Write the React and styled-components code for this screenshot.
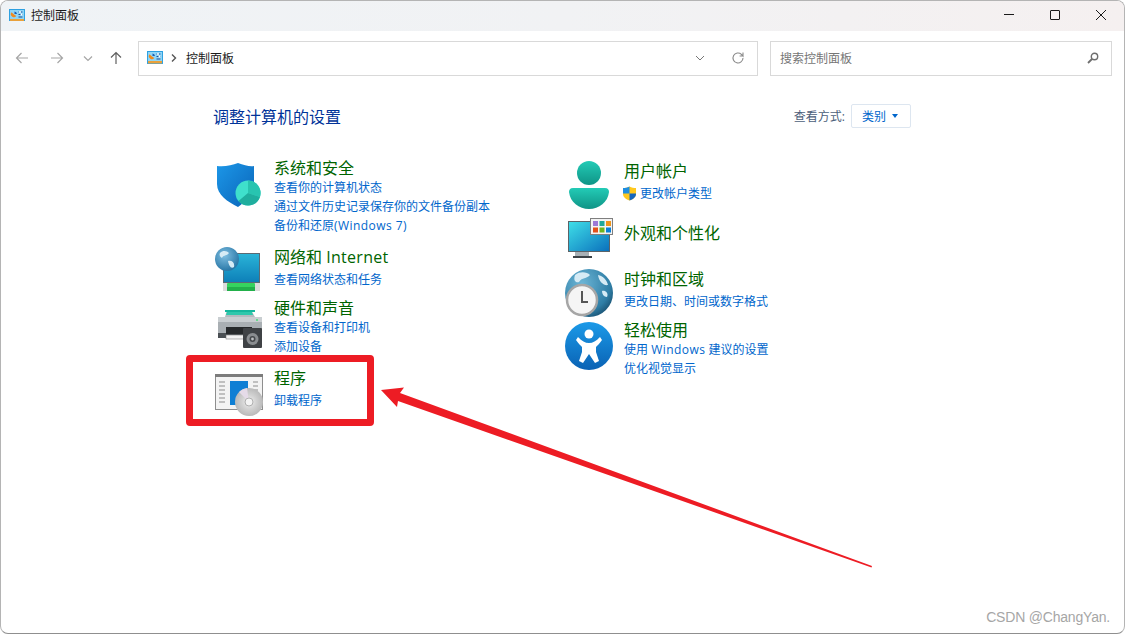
import React from "react";
import styled, { createGlobalStyle } from "styled-components";

const Global = createGlobalStyle`
  html, body { margin: 0; padding: 0; background: #fff; }
  body { font-family: "Open Sans", "Noto Sans CJK SC", sans-serif; overflow: hidden; }
  * { box-sizing: border-box; }
`;

const Page = styled.div`
  position: relative;
  width: 1125px;
  height: 634px;
  overflow: hidden;
  background: #fff;
`;
const Win = styled.div`
  width: 1125px;
  height: 634px;
  display: flex;
  flex-direction: column;
  border: 1px solid #b4b4b4;
  border-bottom: 1px solid #8f8f8f;
  border-radius: 8px;
  overflow: hidden;
  background: #fff;
`;
const TitleBar = styled.div`
  height: 30px;
  flex: none;
  display: flex;
  align-items: center;
  padding: 0 0 2px 8px;
  background: linear-gradient(90deg, #eff3f6 0%, #f1f2f4 50%, #f5f0f0 100%);
`;
const TitleText = styled.span`
  margin-left: 6px;
  font-size: 12px;
  color: #1a1a1a;
`;
const WinButtons = styled.div`
  margin-left: auto;
  display: flex;
  align-items: center;
  gap: 36px;
  padding-right: 18px;
`;
const NavBar = styled.div`
  flex: none;
  display: flex;
  padding: 10px 12px 0 137px;
  position: relative;
  height: 55px;
`;
const NavButtons = styled.div`
  position: absolute;
  left: 14px;
  top: 20px;
  display: grid;
  grid-template-columns: 33px 35px 26px 14px;
  align-items: center;
`;
const AddressBox = styled.div`
  width: 620px;
  height: 35px;
  flex: none;
  border: 1px solid #d9d9d9;
  display: flex;
  align-items: center;
  padding: 0 12px 2px 8px;
  font-size: 12px;
  color: #1a1a1a;
`;
const Crumb = styled.span`
  margin-left: 9px;
`;
const Chevron = styled.svg`
  margin-left: 8px;
`;
const AddressTools = styled.div`
  margin-left: auto;
  display: flex;
  align-items: center;
  gap: 26px;
`;
const SearchBox = styled.div`
  margin-left: 12px;
  width: 342px;
  height: 35px;
  flex: none;
  border: 1px solid #d9d9d9;
  display: flex;
  align-items: center;
  justify-content: space-between;
  padding: 0 12px 2px 9px;
  font-size: 12px;
  color: #767676;
`;
const Main = styled.main`
  width: 698px;
  margin-left: 212px;
  padding-top: 18px;
`;
const HeaderRow = styled.div`
  height: 24px;
  display: flex;
  align-items: center;
  justify-content: space-between;
`;
const Heading = styled.h1`
  margin: 0;
  font-size: 16px;
  font-weight: 400;
  color: #003399;
`;
const ViewBy = styled.div`
  display: flex;
  align-items: center;
  font-size: 12px;
  color: #4c607a;
`;
const Select = styled.div`
  margin-left: 6px;
  width: 60px;
  height: 24px;
  border: 1px solid #dde6f0;
  border-radius: 2px;
  display: flex;
  align-items: center;
  gap: 6px;
  padding-left: 10px;
  color: #0066cc;
`;
const Tri = styled.span`
  width: 0;
  height: 0;
  border-left: 3.5px solid transparent;
  border-right: 3.5px solid transparent;
  border-top: 4px solid #0066cc;
`;
const Columns = styled.div`
  display: grid;
  grid-template-columns: 350px 1fr;
  margin-top: 29px;
  padding-left: 1px;
`;
const Column = styled.div`
  display: flex;
  flex-direction: column;
`;
const Item = styled.section`
  display: flex;
  margin-top: ${(p) => p.$top}px;
`;
const IconCell = styled.div`
  width: 60px;
  height: ${(p) => p.$h}px;
  flex: none;
  position: relative;
`;
const Drawing = styled.svg`
  position: absolute;
  left: ${(p) => p.$x || 0}px;
  top: ${(p) => p.$y}px;
  overflow: visible;
`;
const Body = styled.div`
  display: flex;
  flex-direction: column;
`;
const CatTitle = styled.a`
  display: block;
  font-size: 16px;
  line-height: 21px;
  height: 21px;
  padding-top: 1px;
  color: #006400;
`;
const LinkList = styled.div`
  margin-top: ${(p) => (p.$single ? 3 : 0)}px;
  display: flex;
  align-items: center;
`;
const Links = styled.div`
  display: flex;
  flex-direction: column;
`;
const Lnk = styled.a`
  display: block;
  font-size: 12px;
  line-height: 19px;
  height: 19px;
  color: #0066cc;
`;
const Latin = styled.span`
  letter-spacing: ${(p) => p.$ls}px;
`;
const UacMark = styled.svg`
  margin-right: 3px;
  margin-left: -2px;
  flex: none;
`;
const Watermark = styled.div`
  position: absolute;
  right: 15px;
  top: 607px;
  font-family: "Liberation Sans", sans-serif;
  font-size: 14px;
  line-height: 20px;
  color: #a6a6a6;
  letter-spacing: -0.2px;
`;
const RedFrame = styled.div`
  position: absolute;
  left: 186px;
  top: 355px;
  width: 188px;
  height: 71px;
  border: 7px solid #ed1c24;
  border-radius: 4px;
`;
const Annotation = styled.svg`
  position: absolute;
  left: 0;
  top: 0;
  pointer-events: none;
`;

const CpIcon = ({ size = 16 }) => (
  <svg width={size} height={size * 0.81} viewBox="0 0 16 13">
    <rect x="0.5" y="0.5" width="15" height="12" fill="#8fd6f7" stroke="#2c9fe0" />
    <rect x="1" y="10" width="14" height="2.5" fill="#e9a13b" />
    <path d="M2.5 3.2 A3 3 0 1 0 7.3 7 L5 5.5Z" fill="#f08a1d" />
    <path d="M5.5 2.5 A3 3 0 0 1 8 5 L5.5 5Z" fill="#1a5fb4" />
    <path d="M9.5 3h4M9.5 5.5h4M9.5 8h4" stroke="#1a4f9c" strokeWidth="1.1" />
    <circle cx="11" cy="3" r="1" fill="#fff" />
    <circle cx="12.5" cy="5.5" r="1" fill="#fff" />
  </svg>
);

const Icon = ({ d, w = 14, h = 14, color = "#a6a6a6", sw = 1.2 }) => (
  <svg width={w} height={h} viewBox={`0 0 ${w} ${h}`} fill="none" stroke={color} strokeWidth={sw}>
    <path d={d} />
  </svg>
);

const ShieldIcon = () => (
  <Drawing $y={3} width="48" height="48" viewBox="0 0 48 48">
    <defs>
      <linearGradient id="sh" x1="0" y1="0" x2="1" y2="1">
        <stop offset="0" stopColor="#1c97e8" />
        <stop offset="1" stopColor="#0a64b8" />
      </linearGradient>
    </defs>
    <path d="M3 6 C11 7 18 5 24 3 C30 5 36 7 40 6 V24 C40 35 31 42 24 47 C14 42 3 35 3 24Z" fill="url(#sh)" />
    <circle cx="34" cy="33" r="12.5" fill="#3fe0cc" />
    <path d="M34 33 L34 20.5 A12.5 12.5 0 0 1 46 37Z" fill="#28c4b0" />
    <path d="M34 33 L46 37 A12.5 12.5 0 0 1 24.5 41Z" fill="#1fae9e" />
  </Drawing>
);

const NetIcon = () => (
  <Drawing $y={-2} width="48" height="48" viewBox="0 0 48 48">
    <defs>
      <linearGradient id="sc" x1="0" y1="0" x2="0" y2="1">
        <stop offset="0" stopColor="#2ab4d8" />
        <stop offset="1" stopColor="#0d7fb8" />
      </linearGradient>
      <radialGradient id="gl" cx="0.4" cy="0.35" r="0.75">
        <stop offset="0" stopColor="#7fbfe2" />
        <stop offset="1" stopColor="#1d6d9e" />
      </radialGradient>
    </defs>
    <rect x="9.5" y="9.5" width="36" height="29" fill="url(#sc)" stroke="#5a6a74" />
    <rect x="9" y="39" width="37" height="8" fill="#dcdcdc" />
    <rect x="13" y="39" width="28" height="8" rx="1" fill="#36d35e" />
    <rect x="13" y="43" width="28" height="4" fill="#22b04a" />
    <circle cx="13" cy="15" r="12" fill="url(#gl)" />
    <path d="M6 9 C9 6 13 7 15 9 C13 12 9 11 8 14 C6 13 5 11 6 9Z M14 17 C18 16 21 19 20 23 C17 25 15 22 14 17Z" fill="#d6ebf5" />
  </Drawing>
);

const PrinterIcon = () => (
  <Drawing $y={10} width="48" height="48" viewBox="0 0 48 48">
    <path d="M11 10 L13 3 H37 L41 10Z" fill="#b4babe" />
    <rect x="11" y="3" width="30" height="2" fill="#16b79c" />
    <path d="M13 5 H38 L39 8 H12Z" fill="#2fc8ac" />
    <rect x="4" y="10" width="44" height="16" fill="#a9afb3" />
    <rect x="4" y="10" width="44" height="5" fill="#c9ced1" />
    <rect x="4" y="26" width="44" height="5" fill="#4a4f53" />
    <rect x="12" y="20" width="26" height="7" fill="#26292b" />
    <rect x="12" y="28" width="22" height="4" fill="#f2f2f2" stroke="#6a6a6a" strokeWidth="0.5" />
    <circle cx="43" cy="13" r="0.9" fill="#3adf6c" />
    <rect x="29" y="21" width="19" height="20" rx="1" fill="#3f4245" />
    <circle cx="38.5" cy="32" r="6" fill="#8a8d90" />
    <circle cx="38.5" cy="32" r="3" fill="#45484b" />
    <circle cx="38.5" cy="32" r="1.4" fill="#bdbfc1" />
  </Drawing>
);

const ProgramIcon = () => (
  <Drawing $y={7} width="49" height="48" viewBox="0 0 49 48">
    <defs>
      <radialGradient id="cd" cx="0.5" cy="0.5" r="0.55">
        <stop offset="0" stopColor="#f1f1f1" />
        <stop offset="0.5" stopColor="#d0d0d0" />
        <stop offset="1" stopColor="#b5b5b5" />
      </radialGradient>
    </defs>
    <rect x="1.5" y="0.5" width="47" height="35" fill="#f3f3f3" stroke="#8e8e8e" />
    <rect x="1" y="0" width="48" height="3" fill="#7c7c7c" />
    <path d="M5 8h6M5 12h6M5 16h6M5 20h6M5 24h6M5 28h6M39 8h5M39 12h5M39 16h5M39 20h5" stroke="#8d8d8d" strokeWidth="1" />
    <rect x="16" y="7" width="18" height="24" fill="#0f7fd4" />
    <circle cx="35" cy="28" r="14" fill="url(#cd)" />
    <path d="M35 28 L25 18 A14 14 0 0 1 33 14Z" fill="#e5dbe8" />
    <circle cx="35" cy="28" r="4" fill="#f4f4f4" stroke="#b0b0b0" />
  </Drawing>
);

const UserIcon = () => (
  <Drawing $y={1} $x={0} width="48" height="50" viewBox="0 0 48 50">
    <defs>
      <linearGradient id="tl" x1="0" y1="0" x2="0" y2="1">
        <stop offset="0" stopColor="#23cbb6" />
        <stop offset="1" stopColor="#0f9486" />
      </linearGradient>
    </defs>
    <circle cx="25" cy="12" r="12" fill="url(#tl)" />
    <path d="M9 27 H41 C44 27 45 29 45 31 C44 41 35 48 25 48 C15 48 6 41 5 31 C5 29 6 27 9 27Z" fill="url(#tl)" />
  </Drawing>
);

const PersonalIcon = () => (
  <Drawing $y={-4} width="50" height="42" viewBox="0 0 50 42">
    <defs>
      <linearGradient id="ms" x1="0" y1="0" x2="1" y2="1">
        <stop offset="0" stopColor="#3fe0e8" />
        <stop offset="1" stopColor="#0a6fbc" />
      </linearGradient>
    </defs>
    <rect x="11" y="33" width="14" height="7" fill="#a8b0b5" />
    <rect x="9" y="38" width="19" height="2" fill="#3c4348" />
    <rect x="4.5" y="3.5" width="41" height="30" fill="url(#ms)" stroke="#5b6368" />
    <rect x="26.5" y="0.5" width="22" height="16" fill="#f3f3f3" stroke="#7f7f7f" />
    <rect x="29" y="3" width="5" height="5" fill="#9c78d6" />
    <rect x="35.5" y="3" width="5" height="5" fill="#1fa89a" />
    <rect x="42" y="3" width="5" height="5" fill="#f0951a" />
    <rect x="29" y="9.5" width="5" height="5" fill="#e4501a" />
    <rect x="35.5" y="9.5" width="5" height="5" fill="#6fb51e" />
    <rect x="42" y="9.5" width="5" height="5" fill="#0a80d8" />
  </Drawing>
);

const ClockIcon = () => (
  <Drawing $y={1} $x={1} width="48" height="48" viewBox="0 0 48 48">
    <defs>
      <radialGradient id="gb" cx="0.35" cy="0.3" r="0.85">
        <stop offset="0" stopColor="#6db6d6" />
        <stop offset="0.7" stopColor="#2f7ea6" />
        <stop offset="1" stopColor="#123f5c" />
      </radialGradient>
    </defs>
    <circle cx="24" cy="24" r="24" fill="url(#gb)" />
    <path d="M10 6 C15 2 22 3 25 6 C22 10 17 8 14 13 C11 14 8 12 10 6Z M33 6 C38 7 42 11 43 16 C39 17 34 13 33 6Z M37 22 C40 21 44 24 42 28 C39 28 37 25 37 22Z" fill="#d6ebf5" />
    <circle cx="17" cy="31" r="15" fill="#f5f5f5" stroke="#a6a6a6" strokeWidth="2.5" />
    <path d="M17 22 V33 H23" fill="none" stroke="#565656" strokeWidth="2" />
  </Drawing>
);

const AccessIcon = () => (
  <Drawing $y={3} $x={1} width="48" height="48" viewBox="0 0 48 48">
    <defs>
      <linearGradient id="ac" x1="0" y1="0" x2="0" y2="1">
        <stop offset="0" stopColor="#1b9ae8" />
        <stop offset="1" stopColor="#0a62b4" />
      </linearGradient>
    </defs>
    <circle cx="24" cy="24" r="24" fill="url(#ac)" />
    <circle cx="24" cy="12" r="4.5" fill="#fff" />
    <path d="M13 15 C17 19 20 21 24 21 C28 21 31 19 35 15 L37 18 C34 22 32 24 31 25 V30 L34 39 L30 41 L24 32 L18 41 L14 39 L17 30 V25 C16 24 14 22 11 18Z" fill="#fff" />
  </Drawing>
);

const UacShield = () => (
  <UacMark width="15" height="15" viewBox="0 0 15 15">
    <path d="M7.5 0.5 C9.5 1.5 12 2 14 2 V8 C14 11 11 13.5 7.5 14.5 C4 13.5 1 11 1 8 V2 C3 2 5.5 1.5 7.5 0.5Z" fill="#ffc81e" />
    <path d="M7.5 0.5 V7.5 H1 V2 C3 2 5.5 1.5 7.5 0.5Z" fill="#1f8ee0" />
    <path d="M7.5 7.5 V14.5 C11 13.5 14 11 14 8 V7.5Z" fill="#1466c0" />
  </UacMark>
);

const Cat = ({ top, height, title, links, icon, uac }) => (
  <Item $top={top}>
    <IconCell $h={height}>{icon}</IconCell>
    <Body>
      <CatTitle>{title}</CatTitle>
      {links.length > 0 && (
        <LinkList $single={links.length === 1}>
          {uac && <UacShield />}
          <Links>
            {links.map((l, i) => (
              <Lnk key={i}>{l}</Lnk>
            ))}
          </Links>
        </LinkList>
      )}
    </Body>
  </Item>
);

export default function App() {
  return (
    <Page>
      <Global />
      <Win>
        <TitleBar>
          <CpIcon />
          <TitleText>控制面板</TitleText>
          <WinButtons>
            <Icon w={10} h={10} color="#1a1a1a" sw={1} d="M0 4.5h10" />
            <Icon w={10} h={10} color="#1a1a1a" sw={1} d="M1 .5h8a.5.5 0 0 1 .5.5v8a.5.5 0 0 1-.5.5H1a.5.5 0 0 1-.5-.5V1A.5.5 0 0 1 1 .5z" />
            <Icon w={10} h={10} color="#1a1a1a" sw={1} d="M0 0l10 10M10 0L0 10" />
          </WinButtons>
        </TitleBar>
        <NavBar>
          <NavButtons>
            <Icon d="M13 7H1.5M6.5 2L1.5 7l5 5" />
            <Icon w={16} d="M3 7h11.5M9.5 2l5 5-5 5" />
            <Icon w={10} h={14} d="M1 5.5l4 4 4-4" />
            <Icon color="#5f5f5f" d="M7 13V1.5M2 6.5l5-5 5 5" />
          </NavButtons>
          <AddressBox>
            <CpIcon />
            <Chevron width="6" height="8" viewBox="0 0 6 8">
              <path d="M1 .5L4.5 4 1 7.5" fill="none" stroke="#555" strokeWidth="1.4" />
            </Chevron>
            <Crumb>控制面板</Crumb>
            <AddressTools>
              <Icon w={10} h={10} color="#777" sw={1} d="M1 3l4 4 4-4" />
              <Icon w={14} h={14} color="#8a8a8a" sw={1.1} d="M12 7a5 5 0 1 1-1.6-3.7L12 5V1.5M12 5H8.6" />
            </AddressTools>
          </AddressBox>
          <SearchBox>
            <span>搜索控制面板</span>
            <svg width="12" height="12" viewBox="0 0 12 12" fill="none" stroke="#6e6e6e">
              <circle cx="7.5" cy="4.5" r="3.2" strokeWidth="1.4" />
              <path d="M5 7l-4 4" strokeWidth="1.8" />
            </svg>
          </SearchBox>
        </NavBar>
        <Main>
          <HeaderRow>
            <Heading>调整计算机的设置</Heading>
            <ViewBy>
              查看方式:
              <Select>
                类别
                <Tri />
              </Select>
            </ViewBy>
          </HeaderRow>
          <Columns>
            <Column>
              <Cat top={0} height={78} icon={<ShieldIcon />} title="系统和安全"
                links={["查看你的计算机状态", "通过文件历史记录保存你的文件备份副本", <>备份和还原<Latin $ls={0.45}>(Windows 7)</Latin></>]} />
              <Cat top={11} height={43} icon={<NetIcon />} title={<>网络和 <Latin $ls={0.3}>Internet</Latin></>} links={["查看网络状态和任务"]} />
              <Cat top={8} height={59} icon={<PrinterIcon />} title="硬件和声音" links={["查看设备和打印机", "添加设备"]} />
              <Cat top={11} height={43} icon={<ProgramIcon />} title="程序" links={["卸载程序"]} />
            </Column>
            <Column>
              <Cat top={3} height={43} icon={<UserIcon />} title="用户帐户" links={["更改帐户类型"]} uac />
              <Cat top={19} height={21} icon={<PersonalIcon />} title="外观和个性化" links={[]} />
              <Cat top={25} height={43} icon={<ClockIcon />} title="时钟和区域" links={["更改日期、时间或数字格式"]} />
              <Cat top={8} height={59} icon={<AccessIcon />} title="轻松使用" links={[<>使用 <Latin $ls={0.45}>Windows</Latin> 建议的设置</>, "优化视觉显示"]} />
            </Column>
          </Columns>
        </Main>
      </Win>
      <RedFrame />
      <Annotation width="1125" height="634" viewBox="0 0 1125 634">
        <polygon points="381,390 404,387.5 400,393 872,566 871.5,567.5 398,401 397,407" fill="#ed1c24" />
      </Annotation>
      <Watermark>CSDN @ChangYan.</Watermark>
    </Page>
  );
}
